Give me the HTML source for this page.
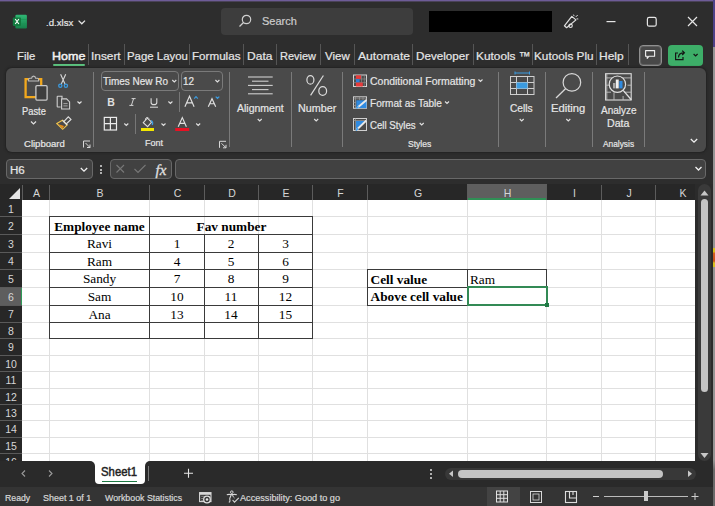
<!DOCTYPE html><html><head><meta charset="utf-8"><style>
*{margin:0;padding:0;box-sizing:border-box}
html,body{width:715px;height:506px;overflow:hidden;background:#2d2d2d}
.a{position:absolute;white-space:nowrap}
svg{position:absolute;left:0;top:0}
</style></head><body>
<div class="a" style="left:0;top:0;width:715px;height:1px;background:#6e5c98"></div>
<div class="a" style="left:0;top:1px;width:715px;height:1px;background:#4a4258"></div>
<div class="a" style="left:713px;top:0;width:2px;height:506px;background:linear-gradient(#4e4288 0,#4e4288 47px,#959595 47px,#959595 460px,#6a6a6a 470px)"></div>
<div class="a" style="left:713px;top:248px;width:2px;height:19px;background:linear-gradient(#d8c020 0,#d8c020 4px,#d86020 5px,#c85020 13px,#d8c020 15px)"></div>
<div class="a" style="left:221px;top:8px;width:192px;height:27px;background:#3d3d3d;border-radius:4px"></div>
<div class="a" style="left:429px;top:11px;width:123px;height:21px;background:#000"></div>
<div class="a" style="left:52.5px;top:63.5px;width:32px;height:2.5px;background:#5cc27f;border-radius:1px"></div>
<div class="a" style="left:88.0px;top:43.5px;width:1px;height:21px;background:#555"></div>
<div class="a" style="left:124.3px;top:43.5px;width:1px;height:21px;background:#555"></div>
<div class="a" style="left:189.4px;top:43.5px;width:1px;height:21px;background:#555"></div>
<div class="a" style="left:243.2px;top:43.5px;width:1px;height:21px;background:#555"></div>
<div class="a" style="left:276.4px;top:43.5px;width:1px;height:21px;background:#555"></div>
<div class="a" style="left:320.1px;top:43.5px;width:1px;height:21px;background:#555"></div>
<div class="a" style="left:353.6px;top:43.5px;width:1px;height:21px;background:#555"></div>
<div class="a" style="left:412.0px;top:43.5px;width:1px;height:21px;background:#555"></div>
<div class="a" style="left:473.0px;top:43.5px;width:1px;height:21px;background:#555"></div>
<div class="a" style="left:531.6px;top:43.5px;width:1px;height:21px;background:#555"></div>
<div class="a" style="left:595.6px;top:43.5px;width:1px;height:21px;background:#555"></div>
<div class="a" style="left:627.8px;top:43.5px;width:1px;height:21px;background:#555"></div>
<div class="a" style="left:639px;top:44.5px;width:23px;height:21px;border:1px solid #909090;border-radius:4px;background:#484848;box-shadow:inset 0 0 0 1px #606060"></div>
<div class="a" style="left:668px;top:45px;width:35px;height:20.5px;background:#3dae68;border-radius:4px"></div>
<div class="a" style="left:6px;top:68px;width:700px;height:84px;background:#4a4a4a;border-radius:6px;box-shadow:0 0 2px 1px #222"></div>
<div class="a" style="left:92.9px;top:72px;width:1px;height:75px;background:#7a7a7a"></div>
<div class="a" style="left:229.0px;top:72px;width:1px;height:75px;background:#7a7a7a"></div>
<div class="a" style="left:291.2px;top:72px;width:1px;height:75px;background:#7a7a7a"></div>
<div class="a" style="left:342.2px;top:72px;width:1px;height:75px;background:#7a7a7a"></div>
<div class="a" style="left:498.0px;top:72px;width:1px;height:75px;background:#7a7a7a"></div>
<div class="a" style="left:545.0px;top:72px;width:1px;height:75px;background:#7a7a7a"></div>
<div class="a" style="left:591.8px;top:72px;width:1px;height:75px;background:#7a7a7a"></div>
<div class="a" style="left:644.3px;top:72px;width:1px;height:75px;background:#7a7a7a"></div>
<div class="a" style="left:101px;top:71px;width:78px;height:19.5px;border:1px solid #7a7a7a;border-radius:4px"></div>
<div class="a" style="left:181px;top:71px;width:42px;height:19.5px;border:1px solid #7a7a7a;border-radius:4px"></div>
<div class="a" style="left:178.5px;top:92px;width:1px;height:20px;background:#777"></div>
<div class="a" style="left:135px;top:114px;width:1px;height:20px;background:#777"></div>
<div class="a" style="left:6px;top:159px;width:87px;height:20px;background:#414141;border:1px solid #686868;border-radius:4px"></div>
<div class="a" style="left:109.5px;top:159px;width:62px;height:20px;background:#414141;border:1px solid #686868;border-radius:4px"></div>
<div class="a" style="left:175px;top:159px;width:531px;height:20px;background:#414141;border:1px solid #686868;border-radius:4px"></div>
<div class="a" style="left:99.8px;top:165.0px;width:2px;height:2px;background:#ddd;border-radius:1px"></div>
<div class="a" style="left:99.8px;top:168.5px;width:2px;height:2px;background:#ddd;border-radius:1px"></div>
<div class="a" style="left:99.8px;top:172.0px;width:2px;height:2px;background:#ddd;border-radius:1px"></div>
<div class="a" style="left:0;top:184px;width:695px;height:16px;background:#272727"></div>
<div class="a" style="left:0;top:200px;width:22px;height:261px;background:#272727"></div>
<svg width="715" height="506" style="pointer-events:none"><polygon points="20,188 20,199 9,199" fill="#e6e6e6"/></svg>
<div class="a" style="left:22px;top:200px;width:673px;height:261px;background:#fff;overflow:hidden">
<div class="a" style="left:27px;top:0;width:1px;height:261px;background:#e0e0e0"></div>
<div class="a" style="left:127px;top:0;width:1px;height:261px;background:#e0e0e0"></div>
<div class="a" style="left:182px;top:0;width:1px;height:261px;background:#e0e0e0"></div>
<div class="a" style="left:236px;top:0;width:1px;height:261px;background:#e0e0e0"></div>
<div class="a" style="left:290px;top:0;width:1px;height:261px;background:#e0e0e0"></div>
<div class="a" style="left:345px;top:0;width:1px;height:261px;background:#e0e0e0"></div>
<div class="a" style="left:445px;top:0;width:1px;height:261px;background:#e0e0e0"></div>
<div class="a" style="left:524px;top:0;width:1px;height:261px;background:#e0e0e0"></div>
<div class="a" style="left:579px;top:0;width:1px;height:261px;background:#e0e0e0"></div>
<div class="a" style="left:633px;top:0;width:1px;height:261px;background:#e0e0e0"></div>
<div class="a" style="left:0;top:16px;width:695px;height:1px;background:#e0e0e0"></div>
<div class="a" style="left:0;top:34px;width:695px;height:1px;background:#e0e0e0"></div>
<div class="a" style="left:0;top:52px;width:695px;height:1px;background:#e0e0e0"></div>
<div class="a" style="left:0;top:69px;width:695px;height:1px;background:#e0e0e0"></div>
<div class="a" style="left:0;top:87px;width:695px;height:1px;background:#e0e0e0"></div>
<div class="a" style="left:0;top:105px;width:695px;height:1px;background:#e0e0e0"></div>
<div class="a" style="left:0;top:122px;width:695px;height:1px;background:#e0e0e0"></div>
<div class="a" style="left:0;top:138px;width:695px;height:1px;background:#e0e0e0"></div>
<div class="a" style="left:0;top:155px;width:695px;height:1px;background:#e0e0e0"></div>
<div class="a" style="left:0;top:171px;width:695px;height:1px;background:#e0e0e0"></div>
<div class="a" style="left:0;top:188px;width:695px;height:1px;background:#e0e0e0"></div>
<div class="a" style="left:0;top:204px;width:695px;height:1px;background:#e0e0e0"></div>
<div class="a" style="left:0;top:220px;width:695px;height:1px;background:#e0e0e0"></div>
<div class="a" style="left:0;top:237px;width:695px;height:1px;background:#e0e0e0"></div>
<div class="a" style="left:0;top:253px;width:695px;height:1px;background:#e0e0e0"></div>
</div>
<div class="a" style="left:467px;top:184px;width:80px;height:16px;background:#5e5e5e"></div>
<div class="a" style="left:467px;top:198px;width:80px;height:2px;background:#2f8f55"></div>
<div class="a" style="left:0;top:287px;width:22px;height:18px;background:#5e5e5e"></div>
<div class="a" style="left:21px;top:287px;width:1px;height:18px;background:#2f9a58"></div>
<div class="a" style="left:22px;top:185px;width:1px;height:15px;background:#5c5c5c"></div>
<div class="a" style="left:49px;top:185px;width:1px;height:15px;background:#5c5c5c"></div>
<div class="a" style="left:149px;top:185px;width:1px;height:15px;background:#5c5c5c"></div>
<div class="a" style="left:204px;top:185px;width:1px;height:15px;background:#5c5c5c"></div>
<div class="a" style="left:258px;top:185px;width:1px;height:15px;background:#5c5c5c"></div>
<div class="a" style="left:312px;top:185px;width:1px;height:15px;background:#5c5c5c"></div>
<div class="a" style="left:367px;top:185px;width:1px;height:15px;background:#5c5c5c"></div>
<div class="a" style="left:467px;top:185px;width:1px;height:15px;background:#5c5c5c"></div>
<div class="a" style="left:546px;top:185px;width:1px;height:15px;background:#5c5c5c"></div>
<div class="a" style="left:601px;top:185px;width:1px;height:15px;background:#5c5c5c"></div>
<div class="a" style="left:655px;top:185px;width:1px;height:15px;background:#5c5c5c"></div>
<div class="a" style="left:0;top:216px;width:22px;height:1px;background:#5a5a5a"></div>
<div class="a" style="left:0;top:234px;width:22px;height:1px;background:#5a5a5a"></div>
<div class="a" style="left:0;top:252px;width:22px;height:1px;background:#5a5a5a"></div>
<div class="a" style="left:0;top:269px;width:22px;height:1px;background:#5a5a5a"></div>
<div class="a" style="left:0;top:287px;width:22px;height:1px;background:#5a5a5a"></div>
<div class="a" style="left:0;top:305px;width:22px;height:1px;background:#5a5a5a"></div>
<div class="a" style="left:0;top:322px;width:22px;height:1px;background:#5a5a5a"></div>
<div class="a" style="left:0;top:338px;width:22px;height:1px;background:#5a5a5a"></div>
<div class="a" style="left:0;top:355px;width:22px;height:1px;background:#5a5a5a"></div>
<div class="a" style="left:0;top:371px;width:22px;height:1px;background:#5a5a5a"></div>
<div class="a" style="left:0;top:388px;width:22px;height:1px;background:#5a5a5a"></div>
<div class="a" style="left:0;top:404px;width:22px;height:1px;background:#5a5a5a"></div>
<div class="a" style="left:0;top:420px;width:22px;height:1px;background:#5a5a5a"></div>
<div class="a" style="left:0;top:437px;width:22px;height:1px;background:#5a5a5a"></div>
<div class="a" style="left:0;top:453px;width:22px;height:1px;background:#5a5a5a"></div>
<div class="a" style="left:49px;top:216px;width:264px;height:1px;background:#3a3a3a"></div>
<div class="a" style="left:49px;top:234px;width:264px;height:1px;background:#3a3a3a"></div>
<div class="a" style="left:49px;top:252px;width:264px;height:1px;background:#3a3a3a"></div>
<div class="a" style="left:49px;top:269px;width:264px;height:1px;background:#3a3a3a"></div>
<div class="a" style="left:49px;top:287px;width:264px;height:1px;background:#3a3a3a"></div>
<div class="a" style="left:49px;top:305px;width:264px;height:1px;background:#3a3a3a"></div>
<div class="a" style="left:49px;top:322px;width:264px;height:1px;background:#3a3a3a"></div>
<div class="a" style="left:49px;top:338px;width:264px;height:1px;background:#3a3a3a"></div>
<div class="a" style="left:49px;top:216px;width:1px;height:123px;background:#3a3a3a"></div>
<div class="a" style="left:149px;top:216px;width:1px;height:123px;background:#3a3a3a"></div>
<div class="a" style="left:312px;top:216px;width:1px;height:123px;background:#3a3a3a"></div>
<div class="a" style="left:204px;top:234px;width:1px;height:105px;background:#3a3a3a"></div>
<div class="a" style="left:258px;top:234px;width:1px;height:105px;background:#3a3a3a"></div>
<div class="a" style="left:367px;top:269px;width:180px;height:1px;background:#3a3a3a"></div>
<div class="a" style="left:367px;top:287px;width:180px;height:1px;background:#3a3a3a"></div>
<div class="a" style="left:367px;top:305px;width:180px;height:1px;background:#3a3a3a"></div>
<div class="a" style="left:367px;top:269px;width:1px;height:37px;background:#3a3a3a"></div>
<div class="a" style="left:467px;top:269px;width:1px;height:37px;background:#3a3a3a"></div>
<div class="a" style="left:546px;top:269px;width:1px;height:19px;background:#3a3a3a"></div>
<div class="a" style="left:466.5px;top:286px;width:81.5px;height:20px;border:2px solid #338a55"></div>
<div class="a" style="left:545px;top:303px;width:4px;height:4px;background:#1f7a45"></div>
<span class="a" style="left:32.99px;top:187.00px;font-family:'Liberation Sans', sans-serif;font-size:10.5px;font-weight:normal;color:#d6d6d6;line-height:normal">A</span>
<span class="a" style="left:96.49px;top:187.00px;font-family:'Liberation Sans', sans-serif;font-size:10.5px;font-weight:normal;color:#d6d6d6;line-height:normal">B</span>
<span class="a" style="left:173.70px;top:187.00px;font-family:'Liberation Sans', sans-serif;font-size:10.5px;font-weight:normal;color:#d6d6d6;line-height:normal">C</span>
<span class="a" style="left:228.20px;top:187.00px;font-family:'Liberation Sans', sans-serif;font-size:10.5px;font-weight:normal;color:#d6d6d6;line-height:normal">D</span>
<span class="a" style="left:282.49px;top:187.00px;font-family:'Liberation Sans', sans-serif;font-size:10.5px;font-weight:normal;color:#d6d6d6;line-height:normal">E</span>
<span class="a" style="left:337.29px;top:187.00px;font-family:'Liberation Sans', sans-serif;font-size:10.5px;font-weight:normal;color:#d6d6d6;line-height:normal">F</span>
<span class="a" style="left:413.91px;top:187.00px;font-family:'Liberation Sans', sans-serif;font-size:10.5px;font-weight:normal;color:#d6d6d6;line-height:normal">G</span>
<span class="a" style="left:503.70px;top:187.00px;font-family:'Liberation Sans', sans-serif;font-size:10.5px;font-weight:normal;color:#d6d6d6;line-height:normal">H</span>
<span class="a" style="left:573.04px;top:187.00px;font-family:'Liberation Sans', sans-serif;font-size:10.5px;font-weight:normal;color:#d6d6d6;line-height:normal">I</span>
<span class="a" style="left:626.38px;top:187.00px;font-family:'Liberation Sans', sans-serif;font-size:10.5px;font-weight:normal;color:#d6d6d6;line-height:normal">J</span>
<span class="a" style="left:679.49px;top:187.00px;font-family:'Liberation Sans', sans-serif;font-size:10.5px;font-weight:normal;color:#d6d6d6;line-height:normal">K</span>
<span class="a" style="left:8.08px;top:202.90px;font-family:'Liberation Sans', sans-serif;font-size:10.5px;font-weight:normal;color:#d6d6d6;line-height:normal">1</span>
<span class="a" style="left:8.08px;top:219.90px;font-family:'Liberation Sans', sans-serif;font-size:10.5px;font-weight:normal;color:#d6d6d6;line-height:normal">2</span>
<span class="a" style="left:8.08px;top:237.90px;font-family:'Liberation Sans', sans-serif;font-size:10.5px;font-weight:normal;color:#d6d6d6;line-height:normal">3</span>
<span class="a" style="left:8.08px;top:255.40px;font-family:'Liberation Sans', sans-serif;font-size:10.5px;font-weight:normal;color:#d6d6d6;line-height:normal">4</span>
<span class="a" style="left:8.08px;top:272.90px;font-family:'Liberation Sans', sans-serif;font-size:10.5px;font-weight:normal;color:#d6d6d6;line-height:normal">5</span>
<span class="a" style="left:8.08px;top:290.90px;font-family:'Liberation Sans', sans-serif;font-size:10.5px;font-weight:normal;color:#d6d6d6;line-height:normal">6</span>
<span class="a" style="left:8.08px;top:308.40px;font-family:'Liberation Sans', sans-serif;font-size:10.5px;font-weight:normal;color:#d6d6d6;line-height:normal">7</span>
<span class="a" style="left:8.08px;top:324.90px;font-family:'Liberation Sans', sans-serif;font-size:10.5px;font-weight:normal;color:#d6d6d6;line-height:normal">8</span>
<span class="a" style="left:8.08px;top:341.40px;font-family:'Liberation Sans', sans-serif;font-size:10.5px;font-weight:normal;color:#d6d6d6;line-height:normal">9</span>
<span class="a" style="left:5.16px;top:357.90px;font-family:'Liberation Sans', sans-serif;font-size:10.5px;font-weight:normal;color:#d6d6d6;line-height:normal">10</span>
<span class="a" style="left:5.55px;top:374.40px;font-family:'Liberation Sans', sans-serif;font-size:10.5px;font-weight:normal;color:#d6d6d6;line-height:normal">11</span>
<span class="a" style="left:5.16px;top:390.90px;font-family:'Liberation Sans', sans-serif;font-size:10.5px;font-weight:normal;color:#d6d6d6;line-height:normal">12</span>
<span class="a" style="left:5.16px;top:406.90px;font-family:'Liberation Sans', sans-serif;font-size:10.5px;font-weight:normal;color:#d6d6d6;line-height:normal">13</span>
<span class="a" style="left:5.16px;top:423.40px;font-family:'Liberation Sans', sans-serif;font-size:10.5px;font-weight:normal;color:#d6d6d6;line-height:normal">14</span>
<span class="a" style="left:5.16px;top:439.90px;font-family:'Liberation Sans', sans-serif;font-size:10.5px;font-weight:normal;color:#d6d6d6;line-height:normal">15</span>
<span class="a" style="left:5.16px;top:455.90px;font-family:'Liberation Sans', sans-serif;font-size:10.5px;font-weight:normal;color:#d6d6d6;line-height:normal">16</span>
<div class="a" style="left:695px;top:184px;width:18px;height:277px;background:#2b2b2b"></div>
<div class="a" style="left:698px;top:184px;width:13px;height:277px;background:#3a3a3a;border-radius:7px"></div>
<div class="a" style="left:701px;top:199px;width:7px;height:193px;background:#c4c4c4;border-radius:4px"></div>
<div class="a" style="left:0;top:461px;width:713px;height:26px;background:#2a2a2a"></div>
<div class="a" style="left:90px;top:461px;width:60px;height:6px;background:#fff"></div>
<div class="a" style="left:0;top:461px;width:95px;height:26px;background:#2a2a2a;border-top-right-radius:5px"></div>
<div class="a" style="left:145px;top:461px;width:568px;height:26px;background:#2a2a2a;border-top-left-radius:5px"></div>
<div class="a" style="left:95px;top:461px;width:50px;height:23px;background:#fff;border-radius:0 0 4px 4px"></div>
<div class="a" style="left:102px;top:480.5px;width:35px;height:1.5px;background:#1f7a45"></div>
<div class="a" style="left:148px;top:466px;width:1px;height:15px;background:#777"></div>
<div class="a" style="left:445px;top:467.5px;width:251px;height:12.5px;background:#383838;border-radius:6px"></div>
<div class="a" style="left:458px;top:469.5px;width:205px;height:8px;background:#c4c4c4;border-radius:4px"></div>
<div class="a" style="left:429.5px;top:469.0px;width:2px;height:2px;background:#ddd;border-radius:1px"></div>
<div class="a" style="left:429.5px;top:473.0px;width:2px;height:2px;background:#ddd;border-radius:1px"></div>
<div class="a" style="left:429.5px;top:477.0px;width:2px;height:2px;background:#ddd;border-radius:1px"></div>
<div class="a" style="left:0;top:487px;width:713px;height:19px;background:#343434"></div>
<div class="a" style="left:487px;top:487px;width:33px;height:19px;background:#434343"></div>
<div class="a" style="left:604px;top:496px;width:84px;height:1px;background:#bbb"></div>
<div class="a" style="left:644px;top:491px;width:4px;height:10px;background:#ccc"></div>
<span class="a" style="left:54.26px;top:218.96px;font-family:'Liberation Serif', serif;font-size:13.3px;font-weight:bold;color:#000;line-height:normal">Employee name</span>
<span class="a" style="left:196.59px;top:218.96px;font-family:'Liberation Serif', serif;font-size:13.3px;font-weight:bold;color:#000;line-height:normal">Fav number</span>
<span class="a" style="left:86.94px;top:236.26px;font-family:'Liberation Serif', serif;font-size:13.3px;font-weight:normal;color:#000;line-height:normal">Ravi</span>
<span class="a" style="left:173.67px;top:236.26px;font-family:'Liberation Serif', serif;font-size:13.3px;font-weight:normal;color:#000;line-height:normal">1</span>
<span class="a" style="left:227.67px;top:236.26px;font-family:'Liberation Serif', serif;font-size:13.3px;font-weight:normal;color:#000;line-height:normal">2</span>
<span class="a" style="left:282.17px;top:236.26px;font-family:'Liberation Serif', serif;font-size:13.3px;font-weight:normal;color:#000;line-height:normal">3</span>
<span class="a" style="left:86.94px;top:253.76px;font-family:'Liberation Serif', serif;font-size:13.3px;font-weight:normal;color:#000;line-height:normal">Ram</span>
<span class="a" style="left:173.67px;top:253.76px;font-family:'Liberation Serif', serif;font-size:13.3px;font-weight:normal;color:#000;line-height:normal">4</span>
<span class="a" style="left:227.67px;top:253.76px;font-family:'Liberation Serif', serif;font-size:13.3px;font-weight:normal;color:#000;line-height:normal">5</span>
<span class="a" style="left:282.17px;top:253.76px;font-family:'Liberation Serif', serif;font-size:13.3px;font-weight:normal;color:#000;line-height:normal">6</span>
<span class="a" style="left:82.88px;top:271.46px;font-family:'Liberation Serif', serif;font-size:13.3px;font-weight:normal;color:#000;line-height:normal">Sandy</span>
<span class="a" style="left:173.67px;top:271.46px;font-family:'Liberation Serif', serif;font-size:13.3px;font-weight:normal;color:#000;line-height:normal">7</span>
<span class="a" style="left:227.67px;top:271.46px;font-family:'Liberation Serif', serif;font-size:13.3px;font-weight:normal;color:#000;line-height:normal">8</span>
<span class="a" style="left:282.17px;top:271.46px;font-family:'Liberation Serif', serif;font-size:13.3px;font-weight:normal;color:#000;line-height:normal">9</span>
<span class="a" style="left:87.68px;top:288.96px;font-family:'Liberation Serif', serif;font-size:13.3px;font-weight:normal;color:#000;line-height:normal">Sam</span>
<span class="a" style="left:170.35px;top:288.96px;font-family:'Liberation Serif', serif;font-size:13.3px;font-weight:normal;color:#000;line-height:normal">10</span>
<span class="a" style="left:224.59px;top:288.96px;font-family:'Liberation Serif', serif;font-size:13.3px;font-weight:normal;color:#000;line-height:normal">11</span>
<span class="a" style="left:278.85px;top:288.96px;font-family:'Liberation Serif', serif;font-size:13.3px;font-weight:normal;color:#000;line-height:normal">12</span>
<span class="a" style="left:88.42px;top:306.66px;font-family:'Liberation Serif', serif;font-size:13.3px;font-weight:normal;color:#000;line-height:normal">Ana</span>
<span class="a" style="left:170.35px;top:306.66px;font-family:'Liberation Serif', serif;font-size:13.3px;font-weight:normal;color:#000;line-height:normal">13</span>
<span class="a" style="left:224.35px;top:306.66px;font-family:'Liberation Serif', serif;font-size:13.3px;font-weight:normal;color:#000;line-height:normal">14</span>
<span class="a" style="left:278.85px;top:306.66px;font-family:'Liberation Serif', serif;font-size:13.3px;font-weight:normal;color:#000;line-height:normal">15</span>
<span class="a" style="left:370.60px;top:271.76px;font-family:'Liberation Serif', serif;font-size:13.3px;font-weight:bold;color:#000;line-height:normal">Cell value</span>
<span class="a" style="left:370.60px;top:289.26px;font-family:'Liberation Serif', serif;font-size:13.3px;font-weight:bold;color:#000;line-height:normal">Above cell value</span>
<span class="a" style="left:469.90px;top:271.76px;font-family:'Liberation Serif', serif;font-size:13.3px;font-weight:normal;color:#000;line-height:normal">Ram</span>
<span class="a" style="left:46.07px;top:18.00px;font-family:'Liberation Sans', sans-serif;font-size:9.358px;font-weight:normal;color:#e6e6e6;line-height:normal;transform:scaleX(1.0320);transform-origin:0 0;-webkit-text-stroke:0.2px #e6e6e6">.d.xlsx</span>
<span class="a" style="left:261.95px;top:15.00px;font-family:'Liberation Sans', sans-serif;font-size:11.592px;font-weight:normal;color:#cccccc;line-height:normal;transform:scaleX(0.9514);transform-origin:0 0;-webkit-text-stroke:0.2px #cccccc">Search</span>
<span class="a" style="left:16.51px;top:50.00px;font-family:'Liberation Sans', sans-serif;font-size:11.453px;font-weight:normal;color:#e6e6e6;line-height:normal;transform:scaleX(0.9882);transform-origin:0 0;-webkit-text-stroke:0.2px #e6e6e6">File</span>
<span class="a" style="left:90.56px;top:50.00px;font-family:'Liberation Sans', sans-serif;font-size:11.453px;font-weight:normal;color:#e6e6e6;line-height:normal;transform:scaleX(1.0357);transform-origin:0 0;-webkit-text-stroke:0.2px #e6e6e6">Insert</span>
<span class="a" style="left:126.60px;top:50.00px;font-family:'Liberation Sans', sans-serif;font-size:11.453px;font-weight:normal;color:#e6e6e6;line-height:normal;transform:scaleX(0.9966);transform-origin:0 0;-webkit-text-stroke:0.2px #e6e6e6">Page Layou</span>
<span class="a" style="left:192.38px;top:50.00px;font-family:'Liberation Sans', sans-serif;font-size:11.453px;font-weight:normal;color:#e6e6e6;line-height:normal;transform:scaleX(1.0174);transform-origin:0 0;-webkit-text-stroke:0.2px #e6e6e6">Formulas</span>
<span class="a" style="left:247.35px;top:50.00px;font-family:'Liberation Sans', sans-serif;font-size:11.453px;font-weight:normal;color:#e6e6e6;line-height:normal;transform:scaleX(1.0522);transform-origin:0 0;-webkit-text-stroke:0.2px #e6e6e6">Data</span>
<span class="a" style="left:280.04px;top:50.00px;font-family:'Liberation Sans', sans-serif;font-size:11.453px;font-weight:normal;color:#e6e6e6;line-height:normal;transform:scaleX(0.9595);transform-origin:0 0;-webkit-text-stroke:0.2px #e6e6e6">Review</span>
<span class="a" style="left:324.60px;top:50.00px;font-family:'Liberation Sans', sans-serif;font-size:11.453px;font-weight:normal;color:#e6e6e6;line-height:normal;transform:scaleX(1.0080);transform-origin:0 0;-webkit-text-stroke:0.2px #e6e6e6">View</span>
<span class="a" style="left:357.50px;top:50.00px;font-family:'Liberation Sans', sans-serif;font-size:11.453px;font-weight:normal;color:#e6e6e6;line-height:normal;transform:scaleX(1.0625);transform-origin:0 0;-webkit-text-stroke:0.2px #e6e6e6">Automate</span>
<span class="a" style="left:415.88px;top:50.00px;font-family:'Liberation Sans', sans-serif;font-size:11.453px;font-weight:normal;color:#e6e6e6;line-height:normal;transform:scaleX(1.0196);transform-origin:0 0;-webkit-text-stroke:0.2px #e6e6e6">Developer</span>
<span class="a" style="left:476.16px;top:50.00px;font-family:'Liberation Sans', sans-serif;font-size:11.453px;font-weight:normal;color:#e6e6e6;line-height:normal;transform:scaleX(1.0360);transform-origin:0 0;-webkit-text-stroke:0.2px #e6e6e6">Kutools ™</span>
<span class="a" style="left:533.87px;top:50.00px;font-family:'Liberation Sans', sans-serif;font-size:11.453px;font-weight:normal;color:#e6e6e6;line-height:normal;transform:scaleX(1.0304);transform-origin:0 0;-webkit-text-stroke:0.2px #e6e6e6">Kutools Plu</span>
<span class="a" style="left:599.25px;top:50.00px;font-family:'Liberation Sans', sans-serif;font-size:11.453px;font-weight:normal;color:#e6e6e6;line-height:normal;transform:scaleX(1.0500);transform-origin:0 0;-webkit-text-stroke:0.2px #e6e6e6">Help</span>
<span class="a" style="left:51.51px;top:50.00px;font-family:'Liberation Sans', sans-serif;font-size:11.453px;font-weight:normal;color:#f2f2f2;line-height:normal;transform:scaleX(1.0931);transform-origin:0 0;-webkit-text-stroke:0.45px #f2f2f2">Home</span>
<span class="a" style="left:22.01px;top:106.00px;font-family:'Liberation Sans', sans-serif;font-size:10.475px;font-weight:normal;color:#e6e6e6;line-height:normal;transform:scaleX(0.8920);transform-origin:0 0;-webkit-text-stroke:0.2px #e6e6e6">Paste</span>
<span class="a" style="left:23.65px;top:139.00px;font-family:'Liberation Sans', sans-serif;font-size:9.078px;font-weight:normal;color:#e6e6e6;line-height:normal;transform:scaleX(1.0514);transform-origin:0 0;-webkit-text-stroke:0.2px #e6e6e6">Clipboard</span>
<span class="a" style="left:102.90px;top:75.00px;font-family:'Liberation Sans', sans-serif;font-size:11.034px;font-weight:normal;color:#e6e6e6;line-height:normal;transform:scaleX(0.9042);transform-origin:0 0;-webkit-text-stroke:0.2px #e6e6e6">Times New Ro</span>
<span class="a" style="left:182.80px;top:75.00px;font-family:'Liberation Sans', sans-serif;font-size:11.034px;font-weight:normal;color:#e6e6e6;line-height:normal;transform:scaleX(0.9000);transform-origin:0 0;-webkit-text-stroke:0.2px #e6e6e6">12</span>
<span class="a" style="left:145.31px;top:138.00px;font-family:'Liberation Sans', sans-serif;font-size:9.078px;font-weight:normal;color:#e6e6e6;line-height:normal;transform:scaleX(0.9882);transform-origin:0 0;-webkit-text-stroke:0.2px #e6e6e6">Font</span>
<span class="a" style="left:236.80px;top:102.00px;font-family:'Liberation Sans', sans-serif;font-size:10.894px;font-weight:normal;color:#e6e6e6;line-height:normal;transform:scaleX(0.9646);transform-origin:0 0;-webkit-text-stroke:0.2px #e6e6e6">Alignment</span>
<span class="a" style="left:297.81px;top:102.00px;font-family:'Liberation Sans', sans-serif;font-size:10.894px;font-weight:normal;color:#e6e6e6;line-height:normal;transform:scaleX(0.9892);transform-origin:0 0;-webkit-text-stroke:0.2px #e6e6e6">Number</span>
<span class="a" style="left:370.07px;top:75.00px;font-family:'Liberation Sans', sans-serif;font-size:11.313px;font-weight:normal;color:#e6e6e6;line-height:normal;transform:scaleX(0.9268);transform-origin:0 0;-webkit-text-stroke:0.2px #e6e6e6">Conditional Formatting</span>
<span class="a" style="left:370.09px;top:97.00px;font-family:'Liberation Sans', sans-serif;font-size:11.034px;font-weight:normal;color:#e6e6e6;line-height:normal;transform:scaleX(0.9130);transform-origin:0 0;-webkit-text-stroke:0.2px #e6e6e6">Format as Table</span>
<span class="a" style="left:370.10px;top:119.00px;font-family:'Liberation Sans', sans-serif;font-size:10.754px;font-weight:normal;color:#e6e6e6;line-height:normal;transform:scaleX(0.9000);transform-origin:0 0;-webkit-text-stroke:0.2px #e6e6e6">Cell Styles</span>
<span class="a" style="left:408.07px;top:139.00px;font-family:'Liberation Sans', sans-serif;font-size:9.218px;font-weight:normal;color:#e6e6e6;line-height:normal;transform:scaleX(0.9292);transform-origin:0 0;-webkit-text-stroke:0.2px #e6e6e6">Styles</span>
<span class="a" style="left:510.03px;top:103.00px;font-family:'Liberation Sans', sans-serif;font-size:10.475px;font-weight:normal;color:#e6e6e6;line-height:normal;transform:scaleX(0.9727);transform-origin:0 0;-webkit-text-stroke:0.2px #e6e6e6">Cells</span>
<span class="a" style="left:551.13px;top:103.00px;font-family:'Liberation Sans', sans-serif;font-size:10.475px;font-weight:normal;color:#e6e6e6;line-height:normal;transform:scaleX(1.0700);transform-origin:0 0;-webkit-text-stroke:0.2px #e6e6e6">Editing</span>
<span class="a" style="left:600.90px;top:104.00px;font-family:'Liberation Sans', sans-serif;font-size:10.754px;font-weight:normal;color:#e6e6e6;line-height:normal;transform:scaleX(0.9289);transform-origin:0 0;-webkit-text-stroke:0.2px #e6e6e6">Analyze</span>
<span class="a" style="left:606.89px;top:118.00px;font-family:'Liberation Sans', sans-serif;font-size:10.475px;font-weight:normal;color:#e6e6e6;line-height:normal;transform:scaleX(1.0143);transform-origin:0 0;-webkit-text-stroke:0.2px #e6e6e6">Data</span>
<span class="a" style="left:602.80px;top:139.00px;font-family:'Liberation Sans', sans-serif;font-size:9.078px;font-weight:normal;color:#e6e6e6;line-height:normal;transform:scaleX(0.9206);transform-origin:0 0;-webkit-text-stroke:0.2px #e6e6e6">Analysis</span>
<span class="a" style="left:10.31px;top:164.00px;font-family:'Liberation Sans', sans-serif;font-size:10.615px;font-weight:normal;color:#e6e6e6;line-height:normal;transform:scaleX(1.0917);transform-origin:0 0;-webkit-text-stroke:0.2px #e6e6e6">H6</span>
<span class="a" style="left:5.32px;top:493.00px;font-family:'Liberation Sans', sans-serif;font-size:8.939px;font-weight:normal;color:#d8d8d8;line-height:normal;transform:scaleX(0.9760);transform-origin:0 0;-webkit-text-stroke:0.2px #d8d8d8">Ready</span>
<span class="a" style="left:43.00px;top:493.00px;font-family:'Liberation Sans', sans-serif;font-size:8.939px;font-weight:normal;color:#d8d8d8;line-height:normal;transform:scaleX(1.0021);transform-origin:0 0;-webkit-text-stroke:0.2px #d8d8d8">Sheet 1 of 1</span>
<span class="a" style="left:104.90px;top:493.00px;font-family:'Liberation Sans', sans-serif;font-size:8.939px;font-weight:normal;color:#d8d8d8;line-height:normal;transform:scaleX(0.9859);transform-origin:0 0;-webkit-text-stroke:0.2px #d8d8d8">Workbook Statistics</span>
<span class="a" style="left:240.30px;top:493.00px;font-family:'Liberation Sans', sans-serif;font-size:8.939px;font-weight:normal;color:#d8d8d8;line-height:normal;transform:scaleX(1.0237);transform-origin:0 0;-webkit-text-stroke:0.2px #d8d8d8">Accessibility: Good to go</span>
<span class="a" style="left:101.38px;top:465.00px;font-family:'Liberation Sans', sans-serif;font-size:12.291px;font-weight:normal;color:#222222;line-height:normal;transform:scaleX(0.9243);transform-origin:0 0;-webkit-text-stroke:0.45px #222222">Sheet1</span>
<svg width="715" height="506" viewBox="0 0 715 506" fill="none">
<defs><linearGradient id="xg" x1="0" y1="0" x2="0" y2="1"><stop offset="0" stop-color="#2fb774"/><stop offset="1" stop-color="#16804a"/></linearGradient></defs>
<rect x="15.4" y="14.8" width="11.5" height="13.7" rx="1.2" fill="url(#xg)"/><path d="M20 19.4 H26.9 M20 24 H26.9" stroke="#1a9050" stroke-width="0.6"/>
<rect x="12.8" y="17.6" width="8.2" height="8.3" rx="0.8" fill="#127a3f"/><path d="M15.2 19 L18.9 24 M18.9 19 L15.2 24" stroke="#fff" stroke-width="1.1"/>
<path d="M78.6 20.6 L81.8 23.8 L85 20.6" stroke="#e6e6e6" stroke-width="1.3"/>
<circle cx="246.5" cy="19.5" r="4.2" stroke="#cfcfcf" stroke-width="1.2"/><path d="M243.5 22.5 L239.5 26.5" stroke="#cfcfcf" stroke-width="1.3"/>
<path d="M564.4 25.8 L571.8 16.4 L576 19.9 L566.6 27.7 Z" stroke="#e0e0e0" stroke-width="1.2" stroke-linejoin="round"/><circle cx="570.6" cy="25.8" r="1.7" stroke="#e0e0e0" stroke-width="1.1"/><path d="M573.4 14.6 L574.2 16.1 M575.8 16.9 L577.7 15 M576.6 18.8 L578.3 19" stroke="#e0e0e0" stroke-width="1"/>
<path d="M606.5 21.6 H615.5" stroke="#e6e6e6" stroke-width="1.2"/>
<rect x="647.4" y="17.4" width="8.8" height="8.8" rx="1.8" stroke="#e6e6e6" stroke-width="1.2"/>
<path d="M688 17 L697 26 M697 17 L688 26" stroke="#e6e6e6" stroke-width="1.2"/>
<path d="M645.6 50.6 H654.6 V56.2 H649 L647.2 58.4 V56.2 H645.6 Z" stroke="#f0f0f0" stroke-width="1.1" stroke-linejoin="round"/>
<path d="M678 53 H675.6 V59.6 H683 V57" stroke="#151515" stroke-width="1.2"/><path d="M678.5 57.5 C678.5 54.5 680.5 52.8 684 52.8 M682.2 50.6 L684.4 52.8 L682.2 55" stroke="#151515" stroke-width="1.2"/><path d="M693.6 54 L695.6 56 L697.6 54" stroke="#151515" stroke-width="1.2"/>
<path d="M29 79.2 H25.6 V97.2 H36" stroke="#f2a81d" stroke-width="2.3"/><path d="M37.5 79.2 H41.2 V85" stroke="#f2a81d" stroke-width="2.3"/>
<path d="M28.6 81 V79.2 Q28.6 78.2 29.8 78.2 H31.6 C31.8 75.4 35.4 75.4 35.6 78.2 H37.4 Q38.6 78.2 38.6 79.2 V81 Z" stroke="#bdbdbd" stroke-width="1.1" fill="#4a4a4a"/>
<rect x="35.9" y="85.7" width="11.2" height="14.4" rx="1" stroke="#c8c8c8" stroke-width="1.3" fill="#3e3e3e"/>
<path d="M31 121.5 L33.5 124 L36 121.5" stroke="#e0e0e0" stroke-width="1.2"/>
<path d="M60.6 74.3 L65 84 M65.7 74.3 L61.3 84" stroke="#d8d8d8" stroke-width="1.1"/><circle cx="60.3" cy="85.7" r="1.6" stroke="#3b9be0" stroke-width="1.3"/><circle cx="65.9" cy="85.7" r="1.6" stroke="#3b9be0" stroke-width="1.3"/>
<path d="M60.6 107 H57.8 Q57.2 107 57.2 106.4 V96.8 Q57.2 96.2 57.8 96.2 H62 V98.6" stroke="#cfcfcf" stroke-width="1.1"/><path d="M61.6 98.9 H66.6 L69.6 101.9 V109 H61.6 Z" stroke="#cfcfcf" stroke-width="1.1"/><path d="M63.4 103.6 H67.6 M63.4 105.9 H67.6" stroke="#bdbdbd" stroke-width="0.8"/>
<path d="M77.5 101.5 L79.5 103.5 L81.5 101.5" stroke="#e0e0e0" stroke-width="1.2"/>
<path d="M56.8 123.5 L62.5 120.3 L67.2 125 L62.7 129.3 Z" stroke="#f2c44a" stroke-width="1.1"/><path d="M62.5 120.3 L67.2 125" stroke="#e6e6e6" stroke-width="1.1"/><path d="M58.5 124.3 L64 126 L62.6 128.3 Z" fill="#f08c10"/>
<path d="M63.8 121.6 L68.3 116.8 L71 119.4 L66.2 124" stroke="#e0e0e0" stroke-width="1.1"/>
<path d="M83.5 147.5 V141.0 H90" stroke="#d8d8d8" stroke-width="1"/><path d="M85.5 143.0 L90 147.5 M90 144.5 V147.5 H87" stroke="#d8d8d8" stroke-width="1"/>
<path d="M219.5 147.8 V141.3 H226" stroke="#d8d8d8" stroke-width="1"/><path d="M221.5 143.3 L226 147.8 M226 144.8 V147.8 H223" stroke="#d8d8d8" stroke-width="1"/>
<path d="M172.3 80 L174.3 82 L176.3 80" stroke="#e0e0e0" stroke-width="1.1"/>
<path d="M215.4 80 L217.4 82 L219.4 80" stroke="#e0e0e0" stroke-width="1.1"/>
<path d="M168.4 101.5 L170.4 103.5 L172.4 101.5" stroke="#e0e0e0" stroke-width="1.1"/>
<path d="M124.3 123.5 L126.3 125.5 L128.3 123.5" stroke="#e0e0e0" stroke-width="1.1"/>
<path d="M161.5 123.5 L163.5 125.5 L165.5 123.5" stroke="#e0e0e0" stroke-width="1.1"/>
<path d="M196.2 123.5 L198.2 125.5 L200.2 123.5" stroke="#e0e0e0" stroke-width="1.1"/>
<text x="111" y="105.6" font-family="Liberation Sans" font-weight="bold" font-size="10.5" fill="#e0e0e0" text-anchor="middle">B</text>
<path d="M131.6 98.6 H135.6 M129.4 105.4 H133.4 M133.6 98.6 L131.4 105.4" stroke="#d4d4d4" stroke-width="1"/>
<path d="M151.1 98.3 V102.4 C151.1 105.4 156.8 105.4 156.8 102.4 V98.3" stroke="#dcdcdc" stroke-width="1.1"/><path d="M150 107.2 H158" stroke="#dcdcdc" stroke-width="1"/>
<path d="M184.9 106.8 L189.5 96.3 L194.1 106.8 M186.6 102.9 H192.4" stroke="#e0e0e0" stroke-width="1.15"/><path d="M194.2 98.6 L196 96.6 L197.8 98.6" stroke="#3b9be0" stroke-width="1.2"/>
<path d="M208.3 106.8 L212 98.7 L215.7 106.8 M209.7 103.7 H214.3" stroke="#e0e0e0" stroke-width="1.15"/><path d="M215.7 96.6 L217.5 98.3 L219.3 96.6" stroke="#3b9be0" stroke-width="1.2"/>
<rect x="104.3" y="117.4" width="12.2" height="12.6" stroke="#ececec" stroke-width="1.2"/><path d="M110.4 117.4 V130 M104.3 123.7 H116.5" stroke="#ececec" stroke-width="1.2"/>
<path d="M143.3 122.6 L147.3 118.2 L151.6 122 L147.6 126.6 Z" stroke="#dcdcdc" stroke-width="1.1"/><path d="M145.5 120 C145 117.5 147.5 116.5 149 118.5" stroke="#dcdcdc" stroke-width="1"/><path d="M151.2 120.5 C152.8 121.5 152.8 123.5 152.3 125" stroke="#3b9be0" stroke-width="1.3"/><rect x="141" y="128" width="13" height="3" fill="#f2e600"/>
<path d="M178.2 126.8 L182.3 117.6 L186.4 126.8 M179.7 123.4 H184.9" stroke="#e0e0e0" stroke-width="1.15"/><rect x="175.2" y="128" width="14" height="3" fill="#e81123"/>
<path d="M248 77.0 H272.7" stroke="#cfcfcf" stroke-width="1.1"/>
<path d="M252 81.2 H268.5" stroke="#cfcfcf" stroke-width="1.1"/>
<path d="M248 85.4 H272.7" stroke="#cfcfcf" stroke-width="1.1"/>
<path d="M252 89.6 H268.5" stroke="#cfcfcf" stroke-width="1.1"/>
<path d="M248 93.8 H272.7" stroke="#cfcfcf" stroke-width="1.1"/>
<path d="M257.7 119 L259.7 121 L261.7 119" stroke="#e0e0e0" stroke-width="1.1"/>
<ellipse cx="310.4" cy="79.9" rx="3.5" ry="4.3" stroke="#dcdcdc" stroke-width="1.2"/><ellipse cx="322.7" cy="91" rx="3.9" ry="4.4" stroke="#dcdcdc" stroke-width="1.2"/><path d="M323.4 75.5 L310.6 95.3" stroke="#dcdcdc" stroke-width="1.2"/>
<path d="M314.2 119 L316.2 121 L318.2 119" stroke="#e0e0e0" stroke-width="1.1"/>
<rect x="353.5" y="75" width="13" height="11.5" stroke="#d4d4d4" stroke-width="1"/><path d="M356 79 H366.5 M356 82.6 H366.5 M361.5 75 V86.5 M364.3 75 V86.5 M353.5 79 H356 M353.5 82.6 H356" stroke="#8a8a8a" stroke-width="0.7"/>
<rect x="355.9" y="75.3" width="5.1" height="3.6" fill="#e83a3a"/><rect x="355.9" y="79.1" width="3.7" height="3.3" fill="#2f7fd8"/><rect x="355.9" y="82.6" width="6.9" height="3.9" fill="#e83a3a"/>
<rect x="353.5" y="96.8" width="13" height="11.5" stroke="#d0d0d0" stroke-width="1"/><path d="M353.5 98.8 H366.5 M355.5 96.8 V108.3 M359.5 96.8 V100 M363 96.8 V100 M353.5 102.5 H356 M353.5 105.5 H356" stroke="#9a9a9a" stroke-width="0.7"/>
<rect x="356.3" y="100.3" width="10.2" height="7.8" fill="#2f8ae0"/><path d="M357 108 L366.5 100" stroke="#e8e8e8" stroke-width="1.8"/><path d="M356.5 108.3 L358.5 106.5" stroke="#3fa0f0" stroke-width="1.6"/>
<rect x="353.5" y="118.5" width="13" height="12" stroke="#d0d0d0" stroke-width="1"/><path d="M353.5 120.5 H366.5 M355.5 118.5 V130.5" stroke="#9a9a9a" stroke-width="0.7"/>
<path d="M356 121 H365.5 L356 130 Z" fill="#2f8ae0"/><path d="M356.5 130 L366.3 120.5" stroke="#e8e8e8" stroke-width="1.8"/><path d="M356 130.5 L358.2 128.4" stroke="#3fa0f0" stroke-width="1.6"/>
<path d="M478.5 79.5 L480.5 81.5 L482.5 79.5" stroke="#e0e0e0" stroke-width="1.1"/>
<path d="M445 101.5 L447 103.5 L449 101.5" stroke="#e0e0e0" stroke-width="1.1"/>
<path d="M419.7 123 L421.7 125 L423.7 123" stroke="#e0e0e0" stroke-width="1.1"/>
<rect x="510.5" y="76.5" width="23.5" height="18" stroke="#d0d0d0" stroke-width="1"/><path d="M510.5 82.5 H534 M510.5 88.5 H534 M516.5 76.5 V94.5 M527.5 76.5 V94.5" stroke="#d0d0d0" stroke-width="1"/><rect x="516.5" y="82.5" width="11" height="6" fill="#3b9be0"/><path d="M515 73 H529.5 M515 71.5 V74.5 M529.5 71.5 V74.5" stroke="#3b9be0" stroke-width="1"/>
<path d="M519.7 119 L521.7 121 L523.7 119" stroke="#e0e0e0" stroke-width="1.1"/>
<circle cx="571.9" cy="82.4" r="8.8" stroke="#d8d8d8" stroke-width="1.2"/><path d="M565.5 88.8 L556 98" stroke="#d8d8d8" stroke-width="1.3"/>
<path d="M566.3 119 L568.3 121 L570.3 119" stroke="#e0e0e0" stroke-width="1.1"/>
<rect x="605.6" y="73.7" width="25.6" height="26.3" stroke="#dcdcdc" stroke-width="1.1"/><path d="M605.6 77.9 H631.2 M606.8 73.7 V100 M605.6 85.2 H609 M627.5 85.2 H631.2 M605.6 92.2 H611 M624 92.2 H631.2 M614 92.5 V100 M623.1 96 V100" stroke="#bdbdbd" stroke-width="0.9"/>
<circle cx="617.4" cy="84.2" r="8.2" stroke="#e0e0e0" stroke-width="1.2" fill="#4a4a4a"/><path d="M623.2 90.4 L631.3 99.7" stroke="#e0e0e0" stroke-width="1.3"/><rect x="615.8" y="79.5" width="2.9" height="8.9" fill="#f0f0f0"/><rect x="619.3" y="81" width="3.2" height="7.4" fill="#2f8ae0"/><rect x="613" y="83" width="2.4" height="5.4" fill="#a8a8a8"/>
<path d="M690.8 139 L694 142.2 L697.2 139" stroke="#f0f0f0" stroke-width="1.3"/>
<path d="M80.8 168 L84 171.2 L87.2 168" stroke="#f0f0f0" stroke-width="1.3"/>
<path d="M116.5 165 L124 172.5 M124 165 L116.5 172.5" stroke="#777" stroke-width="1.1"/><path d="M134.5 169 L138 172.5 L145.5 165" stroke="#777" stroke-width="1.1"/>
<text x="155.6" y="174.8" font-family="Liberation Serif" font-style="italic" font-size="15" fill="#e0e0e0" stroke="#e0e0e0" stroke-width="0.3">fx</text>
<path d="M695.5 167 L698.5 170 L701.5 167" stroke="#f0f0f0" stroke-width="1.3"/>
<polygon points="700.5,195.5 704.5,190.5 708.5,195.5" fill="#c8c8c8"/><polygon points="700.5,453 704.5,458 708.5,453" fill="#c8c8c8"/>
<polygon points="453,470.5 449,473.7 453,477" fill="#c8c8c8"/><polygon points="688,470.5 692,473.7 688,477" fill="#c8c8c8"/>
<path d="M25 470.5 L22 473.5 L25 476.5" stroke="#9a9a9a" stroke-width="1.1"/><path d="M49 470.5 L52 473.5 L49 476.5" stroke="#9a9a9a" stroke-width="1.1"/>
<path d="M188.5 468.8 V477.8 M184 473.3 H193" stroke="#e6e6e6" stroke-width="1.1"/>
<rect x="199.6" y="492.6" width="11.4" height="9" stroke="#d8d8d8" stroke-width="1.1"/><path d="M199.6 493.8 H211" stroke="#d8d8d8" stroke-width="2"/><path d="M201.2 496.3 H204.5 M201.2 498.5 H203.3 M201.2 500.4 H203.3" stroke="#9a9a9a" stroke-width="0.8"/>
<circle cx="207" cy="499.5" r="3.3" stroke="#e0e0e0" stroke-width="1.3" fill="#343434"/><circle cx="207" cy="499.5" r="1.3" fill="#e6e6e6"/>
<circle cx="231.8" cy="492.2" r="1.3" stroke="#d8d8d8" stroke-width="1"/><path d="M226.8 494.8 C228.8 494 230 494.6 231.8 494.6 C233.6 494.6 234.8 494 236.8 494.8" stroke="#d8d8d8" stroke-width="1.1"/><path d="M231 494.8 C231 497 229.2 497.6 229.8 499.6 C230.4 501.2 229.6 502 228.8 502.2" stroke="#d8d8d8" stroke-width="1.1"/><path d="M232.6 495 C233 497 234 497.5 234.5 498" stroke="#d8d8d8" stroke-width="1"/><path d="M232.6 500 L234.5 502.2 L238.8 497.8" stroke="#d8d8d8" stroke-width="1.1"/>
<rect x="496.5" y="491" width="11" height="11" stroke="#e0e0e0" stroke-width="1"/><path d="M500.2 491 V502 M503.8 491 V502 M496.5 494.7 H507.5 M496.5 498.3 H507.5" stroke="#e0e0e0" stroke-width="1"/>
<rect x="530.5" y="491.5" width="11" height="11" stroke="#d8d8d8" stroke-width="1"/><rect x="533" y="494" width="6" height="6" stroke="#d8d8d8" stroke-width="0.8"/>
<rect x="565.5" y="491.5" width="11" height="11" stroke="#dcdcdc" stroke-width="1.1"/><path d="M569.5 491.5 V498 H576.5 M573 491.5 V495" stroke="#dcdcdc" stroke-width="1.1"/>
<path d="M593 496.5 H599" stroke="#d0d0d0" stroke-width="1"/><path d="M691.5 496.5 H698.5 M695 493 V500" stroke="#d0d0d0" stroke-width="1"/>
</svg>
</body></html>
